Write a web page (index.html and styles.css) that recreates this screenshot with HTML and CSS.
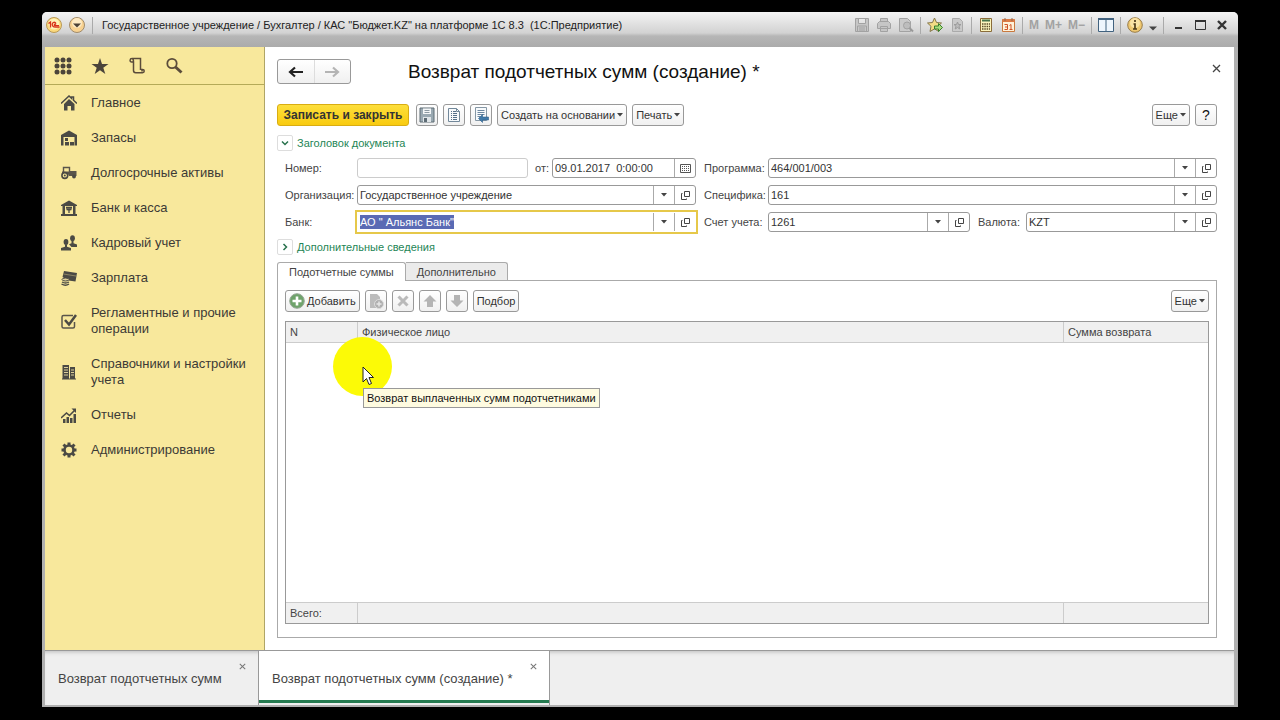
FILE: index.html
```html
<!DOCTYPE html>
<html lang="ru">
<head>
<meta charset="utf-8">
<title>Возврат подотчетных сумм (создание) *</title>
<link rel="stylesheet" href="styles.css">
</head>
<body>
<svg class="defs" aria-hidden="true">
  <symbol id="i-open" viewBox="0 0 11 11"><path d="M4.5 1.5h5v5h-5zM2.500 3.500H1.500v6h5v-1" fill="none" stroke="#444"/></symbol>
  <symbol id="i-down" viewBox="0 0 6 4"><path d="M0 0h6L3 3.500z" fill="#444"/></symbol>
  <symbol id="i-close" viewBox="0 0 9 9"><path d="M1 1l7 7M8 1L1 8" fill="none" stroke="currentColor" stroke-width="1.300"/></symbol>
</svg>
<div class="window">
  <header class="titlebar">
    <div class="titlerow">
      <svg class="orb" viewBox="0 0 16 16"><circle cx="8" cy="8" r="7.500" fill="#fbd97c" stroke="#b99a58"/><circle cx="8" cy="7" r="5.500" fill="#fff3b8"/><path d="M2.500 6.500L4.500 5v5.500M10 6.500C9 4.500 6.200 5 6.200 7.500S8 10.200 13.500 10.200M10 7.500C8.600 6.200 7.600 8.700 9 8.700H13" fill="none" stroke="#d8331c" stroke-width="1.300"/></svg>
      <button class="ghost" aria-label="Меню"><svg class="orb" viewBox="0 0 16 16"><circle cx="8" cy="8" r="7.500" fill="#f8d291" stroke="#a08a6a"/><circle cx="8" cy="6" r="5" fill="#fdeac4"/><path d="M4 6.500h8L8 10.500z" fill="#4b4136"/></svg></button>
      <i class="sep"></i>
      <span class="wintitle">Государственное учреждение / Бухгалтер / КАС "Бюджет.KZ" на платформе 1С 8.3&nbsp; (1С:Предприятие)</span>
      <div class="tools">
        <svg viewBox="0 0 16 16"><path d="M1.500 1.500h13v13h-13zM4.500 1.500v5h7v-5M3.500 14v-5h9v5M5 11h6M5 13h6" fill="#c6c6c6" stroke="#a2a2a2"/></svg>
        <svg viewBox="0 0 16 16"><path d="M4.500 5V1.500h7V5M1.500 6.500l2-2h9l2 2v5h-13zM4.500 9.500h7v5h-7z" fill="#c6c6c6" stroke="#a2a2a2"/></svg>
        <svg viewBox="0 0 16 16"><path d="M1.500 1.500h8l3 3v10h-11z" fill="#cacaca" stroke="#a2a2a2"/><circle cx="9" cy="8.500" r="3.500" fill="#bdbdbd" stroke="#a2a2a2"/><path d="M11.500 11l3.500 3.500" stroke="#999" stroke-width="2"/></svg>
        <i class="sep"></i>
        <svg viewBox="0 0 16 16"><path d="M7.500 1l2 4.500 5 .500-3.700 3.300 1 5.200-4.300-2.600L3 14.500l1-5.200L.500 6l5-.500z" fill="#f3dc86" stroke="#84764a"/><path d="M7.500 9h4V6.500L15.500 10.500l-4 4V12h-4z" fill="#a9dc7c" stroke="#36802c"/></svg>
        <svg viewBox="0 0 16 16"><path d="M3.500 1.500h7l3 3v10h-10z" fill="#cacaca" stroke="#aaa"/><path d="M8.500 5l1 2.500H12l-2 1.700.800 2.800-2.300-1.500L6.200 12 7 9.200 5 7.500h2.500z" fill="#bbb" stroke="#9c9c9c"/></svg>
        <i class="sep"></i>
        <svg viewBox="0 0 16 16"><path d="M2.500 1.500h11v13h-11z" fill="#fcf5bd" stroke="#8a6c3a"/><path d="M4 3.500h8" stroke="#46744a" stroke-width="2"/><path d="M4 7h8M4 9.500h8M4 12h8" stroke="#5b4d2a" stroke-width="1.500" stroke-dasharray="1.500 .800"/></svg>
        <svg viewBox="0 0 16 16"><path d="M2.500 2.500h12v12h-12z" fill="#fff2da" stroke="#c9793e"/><path d="M2.500 3.500h12" stroke="#dc7a45" stroke-width="3"/><path d="M5 1v3M12 1v3" stroke="#8d6a50"/><path d="M4.500 7.500h3v5h-3M5 10h2.500M9.500 8.500l1.500-1V13M9.500 12.500h3" fill="none" stroke="#cf5326"/></svg>
        <i class="sep"></i>
        <span class="mem">M</span><span class="mem">M+</span><span class="mem">M−</span>
        <i class="sep"></i>
        <svg viewBox="0 0 16 16"><path d="M.500 2.500h15v12H.500z" fill="#eef6fd" stroke="#41627f"/><path d="M0 2h16" stroke="#41627f" stroke-width="2"/><path d="M8 2v12" stroke="#41627f"/></svg>
        <i class="sep"></i>
        <svg viewBox="0 0 16 16"><circle cx="8" cy="8" r="7.300" fill="#efc871" stroke="#987c48"/><circle cx="8" cy="6" r="5" fill="#fae3a5"/><path d="M8 3v2M6.500 7H8v5M6 12h4" fill="none" stroke="#4c3a1a" stroke-width="1.700"/></svg>
        <svg class="mini" viewBox="0 0 8 5"><path d="M0 .500h8L4 4.500z" fill="#444"/></svg>
        <i class="sep"></i>
        <button class="ghost" aria-label="Свернуть"><svg viewBox="0 0 16 16"><path d="M5 11h7" stroke="#333" stroke-width="2"/></svg></button>
        <button class="ghost" aria-label="Развернуть"><svg viewBox="0 0 16 16"><path d="M3.500 3.500h10v9h-10z" fill="none" stroke="#333"/><path d="M3 4h11" stroke="#333" stroke-width="2"/></svg></button>
        <button class="ghost" aria-label="Закрыть окно"><svg viewBox="0 0 16 16"><path d="M4 4l8 8M12 4l-8 8" stroke="#333" stroke-width="2.400"/></svg></button>
      </div>
    </div>
  </header>

  <div class="body">
    <aside class="sidebar">
      <div class="sidetools">
        <button class="ghost" aria-label="Разделы"><svg viewBox="0 0 18 18"><g fill="#4b443a"><circle cx="3" cy="3" r="2.500"/><circle cx="9" cy="3" r="2.500"/><circle cx="15" cy="3" r="2.500"/><circle cx="3" cy="9" r="2.500"/><circle cx="9" cy="9" r="2.500"/><circle cx="15" cy="9" r="2.500"/><circle cx="3" cy="15" r="2.500"/><circle cx="9" cy="15" r="2.500"/><circle cx="15" cy="15" r="2.500"/></g></svg></button>
        <button class="ghost" aria-label="Избранное"><svg viewBox="0 0 18 18"><path d="M9 1l2 6h6.500l-5.200 3.800 2 6.200L9 13.200 3.700 17l2-6.200L.500 7H7z" fill="#4b443a"/></svg></button>
        <button class="ghost" aria-label="История"><svg viewBox="0 0 18 18"><path d="M4 1.500h8.500v11.500M5.500 5v8.500c0 1.700 1 2.200 2.200 2.200h6.800c2.300 0 2.300-3.200 0-3.200h-.500v2M5.500 5H3.700C1.500 5 1.500 1.500 4 1.500c1.500 0 1.500 2 1.500 3.500" fill="none" stroke="#5b4c3a" stroke-width="1.500"/></svg></button>
        <button class="ghost" aria-label="Поиск"><svg viewBox="0 0 18 18"><circle cx="7" cy="6.500" r="4.700" fill="none" stroke="#5b4c3a" stroke-width="1.800"/><path d="M10.500 10l6 5.500" stroke="#5b4c3a" stroke-width="3"/></svg></button>
      </div>
      <nav class="menu">
        <a href="#"><svg viewBox="0 0 16 16"><path d="M0 8.500L8 1l2.500 2.300V2h2v3.200L16 8.500" fill="none" stroke="#4b4a44" stroke-width="1.500"/><path d="M8 4l5.500 5v6.500H10V11H6.500v4.500H3V9z" fill="#4b4a44"/></svg><span>Главное</span></a>
        <a href="#"><svg viewBox="0 0 16 16"><path d="M0 5l8-4.500L16 5v10.500h-2.500V7h-11v8.500H0z" fill="#4b4a44"/><path d="M4 8h3v3H4zM4 12h4v3.500H4zM9 12h4v3.500H9z" fill="#4b4a44"/></svg><span>Запасы</span></a>
        <a href="#"><svg viewBox="0 0 16 16"><path d="M2.500 7V2.500h6V8" fill="none" stroke="#5a554a" stroke-width="1.400"/><path d="M1 6.500h7l1-.500h6.500v5H8L7 9H1z" fill="#5a554a"/><circle cx="3.800" cy="10.500" r="2.900" fill="#f8e89c" stroke="#4b4a44" stroke-width="1.600"/><circle cx="3.800" cy="10.500" r="1" fill="#4b4a44"/><circle cx="13" cy="11.500" r="1.900" fill="#4b4a44"/></svg><span>Долгосрочные активы</span></a>
        <a href="#"><svg viewBox="0 0 16 16"><path d="M0 5l8-4.500L16 5v1H0zM1.500 6H4v8H1.500zM12 6h2.500v8H12zM0 14h16v2H0z" fill="#4b4a44"/><path d="M5 7.500h6M5.500 9.500h5M8 8v5M6 7v2q2 2 4 0V7" fill="none" stroke="#4b4a44" stroke-width="1.300"/></svg><span>Банк и касса</span></a>
        <a href="#"><svg viewBox="0 0 16 16"><g fill="#4b4a44"><ellipse cx="11.500" cy="3.300" rx="2.400" ry="3"/><path d="M10.500 6h2v2.200l3.500 1.300V12h-5.500L8 9.300l2.500-1z"/><ellipse cx="5" cy="7" rx="2.400" ry="3"/><path d="M4 9.500h2v2.200l4 1.300v2.500H0V13l4-1.300z"/></g></svg><span>Кадровый учет</span></a>
        <a href="#"><svg viewBox="0 0 16 16"><path d="M3 1l13 2-1.500 8.500-7-1L1.500 7z" fill="#4b4a44"/><path d="M2.500 4l12.500 2" stroke="#8d8564"/><ellipse cx="4.500" cy="9.500" rx="3.500" ry="1.500" fill="#ddd09a" stroke="#4b4a44"/><path d="M1 12q3.500 2 7 0M.500 14q4 2.500 7.500 0" fill="none" stroke="#4b4a44" stroke-width="1.300"/></svg><span>Зарплата</span></a>
        <a href="#"><svg viewBox="0 0 16 16"><path d="M12 2.500H2.500Q1 2.500 1 4v9.500Q1 15 2.500 15H12q1.500 0 1.500-1.500V9" fill="none" stroke="#5a554a" stroke-width="1.500"/><path d="M4 7l4 4.500L15 2" fill="none" stroke="#4b4a44" stroke-width="2.500"/></svg><span>Регламентные и прочие операции</span></a>
        <a href="#"><svg viewBox="0 0 16 16"><path d="M1.500 1H8v14H1.500zM9 3h5v12H9z" fill="#4b4a44"/><path d="M3 3.500h4M3 6h4M3 8.500h4M3 11h4M10 6h3M10 8.500h3M10 11h3" stroke="#ddd09a"/><path d="M1 15h14" stroke="#4b4a44"/></svg><span>Справочники и настройки учета</span></a>
        <a href="#"><svg viewBox="0 0 16 16"><path d="M2 12h2.500v4H2zM5.500 10H8v6H5.500zM9 11h2.500v5H9zM12.500 7H15v9h-2.500z" fill="#4b4a44"/><path d="M0 11l5.500-5 3 2.500L14 3" fill="none" stroke="#4b4a44" stroke-width="1.600"/><path d="M10.500 1.500H15V6z" fill="#4b4a44"/></svg><span>Отчеты</span></a>
        <a href="#"><svg viewBox="0 0 16 16"><circle cx="8" cy="8" r="4.500" fill="none" stroke="#4b4a44" stroke-width="2.600"/><path d="M8 .500v3M8 12.500v3M.500 8h3M12.500 8h3M2.500 2.500l2 2M11.500 11.500l2 2M13.500 2.500l-2 2M4.500 11.500l-2 2" stroke="#4b4a44" stroke-width="3"/></svg><span>Администрирование</span></a>
      </nav>
    </aside>

    <main class="page">
      <div class="pagehead">
        <div class="history">
          <button aria-label="Назад"><svg viewBox="0 0 16 12"><path d="M2 6h13M7 1.500L2 6l5 4.500" fill="none" stroke="#222" stroke-width="2.200"/></svg></button>
          <button aria-label="Вперед"><svg viewBox="0 0 16 12"><path d="M1 6h13M9 1.500L14 6l-5 4.500" fill="none" stroke="#b4b4b4" stroke-width="2.200"/></svg></button>
        </div>
        <h1>Возврат подотчетных сумм (создание) *</h1>
        <button class="ghost closepage" aria-label="Закрыть"><svg viewBox="0 0 9 9"><use href="#i-close"/></svg></button>
      </div>

      <div class="bar">
        <button class="btn primary">Записать и закрыть</button>
        <button class="btn icon" aria-label="Записать"><svg viewBox="0 0 16 16"><path d="M1 1h14v14H1z" fill="#9aa9b2" stroke="#5e6c75"/><path d="M4 1.500h8V7H4z" fill="#f4f6f7"/><path d="M4 10h8v5H4z" fill="#dfe5e8"/><path d="M5.500 3.500h5M5.500 5.500h5" stroke="#8c9aa3"/><path d="M5 11h3v4H5z" fill="#5e6c75"/></svg></button>
        <button class="btn icon" aria-label="Провести"><svg viewBox="0 0 16 16"><path d="M2.500 1.500h8l3 3v10h-11z" fill="#f7fafc" stroke="#72889a"/><path d="M10.500 1.500v3h3" fill="none" stroke="#72889a"/><path d="M5 4.500h1M7 4.500h3M5 6.500h1M7 6.500h4M5 8.500h1M7 8.500h4M5 10.500h1M7 10.500h4M5 12.500h1M7 12.500h4" stroke="#557089"/></svg></button>
        <button class="btn icon" aria-label="Движения документа"><svg viewBox="0 0 16 16"><path d="M2.500.500h11v13h-11z" fill="#f7fafc" stroke="#8597a5"/><path d="M4.500 3.500h7M4.500 5.500h7M4.500 7.500h7M4.500 9.500h3" stroke="#6c87a0"/><path d="M5.500 11.500l4-4V10H15.500v3H9.500v2.500z" fill="#3f79a8" stroke="#2f608c" stroke-width=".6"/></svg></button>
        <button class="btn">Создать на основании<svg class="arr"><use href="#i-down"/></svg></button>
        <button class="btn">Печать<svg class="arr"><use href="#i-down"/></svg></button>
        <span class="grow"></span>
        <button class="btn">Еще<svg class="arr"><use href="#i-down"/></svg></button>
        <button class="btn icon help">?</button>
      </div>

      <button class="group"><i><svg viewBox="0 0 8 8"><path d="M1 2.500l3 3 3-3" fill="none" stroke="#28724d" stroke-width="1.500"/></svg></i>Заголовок документа</button>

      <form class="form">
        <label for="num">Номер:</label>
        <div class="cell">
          <div class="field pale grow"><input id="num"></div>
          <label for="date" class="from">от:</label>
          <div class="field date"><input id="date" value="09.01.2017&nbsp; 0:00:00"><button type="button" aria-label="Календарь"><svg viewBox="0 0 11 11"><path d="M.500 1.500h10v8H.500z" fill="none" stroke="#555"/><path d="M2 3.500h7M2 5.500h7M2 7.500h7" stroke="#555" stroke-dasharray="1 1"/></svg></button></div>
        </div>
        <label for="prog">Программа:</label>
        <div class="field"><input id="prog" value="464/001/003"><button type="button" aria-label="Выбрать"><svg class="arr"><use href="#i-down"/></svg></button><button type="button" aria-label="Открыть"><svg><use href="#i-open"/></svg></button></div>

        <label for="org">Организация:</label>
        <div class="field"><input id="org" value="Государственное учреждение"><button type="button" aria-label="Выбрать"><svg class="arr"><use href="#i-down"/></svg></button><button type="button" aria-label="Открыть"><svg><use href="#i-open"/></svg></button></div>
        <label for="spec">Специфика:</label>
        <div class="field"><input id="spec" value="161"><button type="button" aria-label="Выбрать"><svg class="arr"><use href="#i-down"/></svg></button><button type="button" aria-label="Открыть"><svg><use href="#i-open"/></svg></button></div>

        <label for="bank">Банк:</label>
        <div class="field active"><input id="bank" value="АО &quot; Альянс Банк&quot;"><button type="button" aria-label="Выбрать"><svg class="arr"><use href="#i-down"/></svg></button><button type="button" aria-label="Открыть"><svg><use href="#i-open"/></svg></button></div>
        <label for="acc">Счет учета:</label>
        <div class="cell">
          <div class="field grow"><input id="acc" value="1261"><button type="button" aria-label="Выбрать"><svg class="arr"><use href="#i-down"/></svg></button><button type="button" aria-label="Открыть"><svg><use href="#i-open"/></svg></button></div>
          <label for="cur" class="currency">Валюта:</label>
          <div class="field cur"><input id="cur" value="KZT"><button type="button" aria-label="Выбрать"><svg class="arr"><use href="#i-down"/></svg></button><button type="button" aria-label="Открыть"><svg><use href="#i-open"/></svg></button></div>
        </div>
      </form>

      <button class="group"><i><svg viewBox="0 0 8 8"><path d="M2.500 1l3 3-3 3" fill="none" stroke="#28724d" stroke-width="1.500"/></svg></i>Дополнительные сведения</button>

      <div class="tabs">
        <button class="tab on">Подотчетные суммы</button><button class="tab">Дополнительно</button>
      </div>
      <section class="panel">
        <div class="bar">
          <button class="btn"><svg viewBox="0 0 16 16"><circle cx="8" cy="8" r="7.300" fill="#6fa36b" stroke="#98a898"/><path d="M8 3.500v9M3.500 8h9" stroke="#fff" stroke-width="2.600"/></svg>Добавить</button>
          <button class="btn icon" aria-label="Скопировать"><svg viewBox="0 0 16 16"><path d="M2 1h7l3 3v11H2z" fill="#bcbcbc"/><circle cx="11" cy="11" r="4.500" fill="#b0b0b0" stroke="#ddd"/><path d="M11 8.500v5M8.500 11h5" stroke="#e6e6e6" stroke-width="1.500"/></svg></button>
          <button class="btn icon" aria-label="Удалить"><svg viewBox="0 0 16 16"><path d="M3.500 3.500l9 9M12.500 3.500l-9 9" stroke="#bababa" stroke-width="3"/></svg></button>
          <button class="btn icon" aria-label="Вверх"><svg viewBox="0 0 16 16"><path d="M8 2l6.500 6.500H11V14H5V8.500H1.500z" fill="#b4b4b4"/></svg></button>
          <button class="btn icon" aria-label="Вниз"><svg viewBox="0 0 16 16"><path d="M8 14l6.500-6.500H11V2H5v5.500H1.500z" fill="#b4b4b4"/></svg></button>
          <button class="btn">Подбор</button>
          <span class="grow"></span>
          <button class="btn">Еще<svg class="arr"><use href="#i-down"/></svg></button>
        </div>
        <div class="gridwrap">
          <table class="grid">
            <thead><tr><th class="n">N</th><th>Физическое лицо</th><th class="sum">Сумма возврата</th></tr></thead>
            <tbody><tr><td colspan="3"></td></tr></tbody>
            <tfoot><tr><td>Всего:</td><td></td><td></td></tr></tfoot>
          </table>
          <div class="pointer">
            <svg viewBox="0 0 12 20"><path d="M1 1v15l3.500-3.500L7 18.500l2.500-1L7 11.500h4.500z" fill="#fff" stroke="#222"/></svg>
          </div>
          <div class="tip" role="tooltip">Возврат выплаченных сумм подотчетниками</div>
        </div>
      </section>
    </main>
  </div>

  <footer class="windows">
    <div class="wtab"><a href="#">Возврат подотчетных сумм</a><button class="ghost" aria-label="Закрыть вкладку"><svg><use href="#i-close"/></svg></button></div>
    <div class="wtab on"><a href="#">Возврат подотчетных сумм (создание) *</a><button class="ghost" aria-label="Закрыть вкладку"><svg><use href="#i-close"/></svg></button></div>
  </footer>
</div>
<script src="script.js"></script>
</body>
</html>
```
FILE: styles.css
```css
* { box-sizing: border-box; }
body {
  margin: 0;
  height: 100vh;
  padding: 12px 42px 13px;
  background: #000;
  color: #444;
  font: 11px/14px "Liberation Sans", Arial, sans-serif;
}
button, input { font: inherit; color: inherit; margin: 0; padding: 0; }
svg { display: block; flex: none; }
a { color: inherit; text-decoration: none; }
.defs { position: absolute; width: 0; height: 0; }
.ghost { border: 0; background: none; display: flex; }
.grow { flex: 1; }

.window {
  height: 100%;
  display: flex;
  flex-direction: column;
  padding: 0 4px 2px 3px;
  background: #b0b0b0;
  border-radius: 5px 5px 0 0;
}
.titlebar {
  height: 35px;
  margin: 0 -4px 0 -3px;
  padding: 0 8px 0 4px;
  border-radius: 5px 5px 0 0;
  background: linear-gradient(#f4f4f4, #d2d2d2 21px, #b6b6b6 24px, #ababab);
}
.titlerow { display: flex; align-items: center; gap: 7px; height: 26px; }
.orb { width: 16px; height: 16px; }
.sep { width: 1px; height: 17px; background: #aaa; }
.wintitle { margin-left: 2px; color: #222; white-space: nowrap; }
.tools { display: flex; align-items: center; gap: 6px; margin-left: auto; }
.tools svg { width: 16px; height: 16px; }
.tools .mini { width: 8px; height: 5px; margin-top: 6px; }
.mem { color: #a2a2a2; font-weight: bold; font-size: 12px; }

.body { flex: 1; display: flex; min-height: 0; }
.sidebar { width: 220px; flex: none; background: #f8e89c; border-right: 1px solid #b0a566; }
.sidetools { display: flex; align-items: center; gap: 19px; height: 38px; padding-left: 9px; border-bottom: 1px solid #b5aa58; }
.sidetools svg { width: 18px; height: 18px; }
.menu { padding: 1px 16px; font-size: 13px; line-height: 16px; color: #3c3a36; }
.menu a { display: flex; align-items: center; gap: 14px; padding: 9px 0 10px; }
.menu svg { width: 16px; height: 16px; }

.page { flex: 1; min-width: 0; display: flex; flex-direction: column; padding: 12px 17px 12px 12px; background: #fff; }
.pagehead { display: flex; align-items: center; height: 25px; }
.history { display: flex; width: 74px; height: 25px; border: 1px solid #999; border-radius: 3px; background: linear-gradient(#fff, #f0f0f0); }
.history button { flex: 1; display: flex; align-items: center; justify-content: center; border: 0; background: none; }
.history button + button { border-left: 1px solid #ddd; }
.history svg { width: 16px; height: 12px; }
h1 { flex: 1; margin: 0 0 0 57px; font-size: 19px; line-height: 22px; font-weight: normal; color: #111; }
.closepage { color: #444; align-self: flex-start; padding-top: 5px; margin-right: -4px; }
.closepage svg { width: 9px; height: 9px; }

.bar { display: flex; gap: 5px; }
.page > .bar { margin-top: 20px; }
.btn {
  display: flex;
  align-items: center;
  justify-content: center;
  gap: 2px;
  height: 22px;
  padding: 0 3px;
  border: 1px solid #999;
  border-radius: 3px;
  background: linear-gradient(#fff, #f0f0f0);
  color: #333;
  white-space: nowrap;
}
.btn svg { width: 16px; height: 16px; }
.btn .arr, .arr { width: 6px; height: 4px; }
.icon { width: 22px; padding: 0; }
.help { font-size: 14px; color: #111; }
.primary { width: 132px; margin-right: 2px; border-color: #d9ad12; background: linear-gradient(#fddf3c, #f9cb10); font-weight: bold; font-size: 12px; }
.group { display: flex; align-items: center; gap: 4px; align-self: flex-start; height: 16px; border: 0; background: none; color: #1e8556; }
.page > .bar + .group { margin-top: 9px; }
.group i { width: 16px; height: 16px; display: flex; align-items: center; justify-content: center; border: 1px solid #ddd; border-radius: 2px; }
.group svg { width: 8px; height: 8px; }

.form {
  display: grid;
  grid-template-columns: 72px 339px 72px 1fr;
  row-gap: 7px;
  align-items: center;
  margin: 7px 0;
  padding-left: 8px;
}
.form > label:nth-of-type(even) { padding-left: 8px; }
.form label { white-space: nowrap; }
.cell { display: flex; align-items: center; min-width: 0; }
.field { display: flex; height: 20px; min-width: 0; border: 1px solid #999; border-radius: 3px; background: #fff; }
.field input { flex: 1; min-width: 0; width: 0; border: 0; outline: 0; padding: 0 2px; background: none; color: #333; }
.field button { width: 21px; display: flex; align-items: center; justify-content: center; border: 0; border-left: 1px solid #aaa; background: none; }
.field svg { width: 11px; height: 11px; }
.field .arr { width: 6px; height: 4px; }
.pale { border-color: #ccc; }
.from { width: 24px; padding-left: 7px; }
.date { width: 144px; }
.currency { width: 56px; padding-left: 8px; }
.cur { width: 191px; }
.active { border-color: transparent; border-radius: 0; outline: 2px solid #e6c84a; }
.active input::selection { background: #5a6ab4; color: #fff; }

.tabs { display: flex; margin-top: 7px; }
.tab { height: 18px; padding: 0 11px; border: 1px solid #aaa; border-left: 0; border-bottom: 0; background: #ebebeb; border-radius: 0 3px 0 0; }
.tab.on { border-left: 1px solid #aaa; border-radius: 3px 3px 0 0; background: #fff; height: 19px; margin-bottom: -1px; position: relative; }
.panel { flex: 1; min-height: 0; display: flex; flex-direction: column; padding: 9px 7px 13px; border: 1px solid #aaa; }
.gridwrap { position: relative; flex: 1; min-height: 0; margin-top: 9px; }
.grid { width: 100%; height: 100%; border: 1px solid #999; border-collapse: separate; border-spacing: 0; table-layout: fixed; }
.grid th, .grid td { padding: 0 4px; text-align: left; font-weight: normal; }
.grid th, .grid tfoot td { height: 21px; background: #f0f0f0; }
.grid th { border-bottom: 1px solid #ccc; }
.grid tfoot td { border-top: 1px solid #ccc; }
.grid th + th, .grid tfoot td + td { border-left: 1px solid #ccc; }
.grid .n { width: 71px; }
.grid .sum { width: 145px; }
.pointer { position: absolute; left: 48px; top: 16px; width: 59px; height: 59px; border-radius: 50%; background: #fcfa06; }
.pointer svg { width: 12px; height: 20px; margin: 29px 0 0 29px; }
.tip { position: absolute; left: 78px; top: 67px; padding: 2px 3px; border: 1px solid #999; background: #fefbe0; color: #111; white-space: nowrap; }

.windows { display: flex; height: 55px; border-top: 1px solid #999; background: #efefef; box-shadow: inset 0 4px 4px -3px #bbb; font-size: 13px; line-height: 16px; }
.wtab { display: flex; align-items: center; padding: 2px 12px 0 13px; border-right: 1px solid #999; }
.wtab:first-child { width: 214px; justify-content: space-between; }
.wtab button { align-self: flex-start; padding-top: 10px; color: #777; }
.wtab svg { width: 7px; height: 7px; }
.wtab.on { width: 291px; justify-content: space-between; background: #fff; box-shadow: inset 0 -5px #257a50, inset 0 -2px #fff; background-clip: padding-box; }
.wtab.on { box-shadow: inset 0 -2px #efefef, inset 0 -5px #257a50; }
```
FILE: script.js
```js
const bank = document.getElementById("bank");
bank.focus();
bank.select();
```
